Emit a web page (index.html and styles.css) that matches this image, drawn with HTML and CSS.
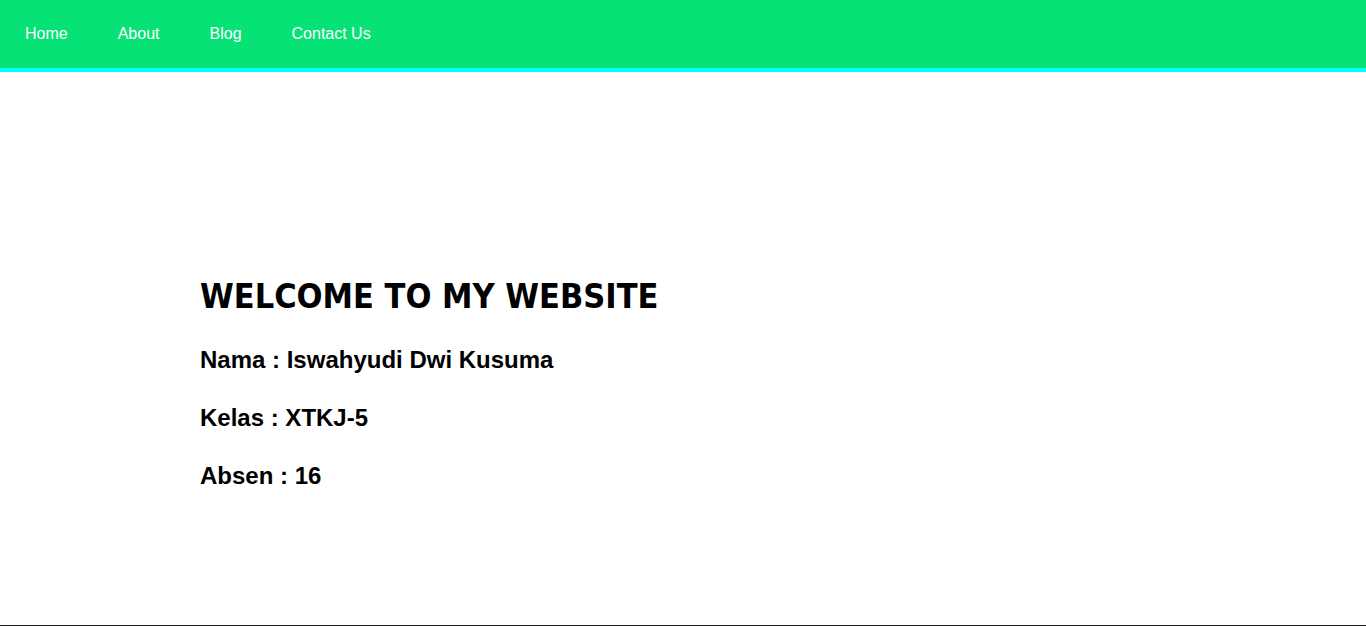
FILE: index.html
```html
<!DOCTYPE html>
<html lang="id">
<head>
<meta charset="utf-8">
<title>My Website</title>
<link rel="stylesheet" href="styles.css">
</head>
<body>
<nav class="nav">
  <ul class="nav-list">
    <li><a href="#">Home</a></li>
    <li><a href="#">About</a></li>
    <li><a href="#">Blog</a></li>
    <li><a href="#">Contact Us</a></li>
  </ul>
</nav>
<main class="main">
  <h1 class="title">WELCOME TO MY WEBSITE</h1>
  <p class="info">Nama : Iswahyudi Dwi Kusuma</p>
  <p class="info">Kelas : XTKJ-5</p>
  <p class="info">Absen : 16</p>
</main>
<footer class="footer"></footer>
</body>
</html>
```
FILE: styles.css
```css
* { box-sizing: border-box; }
html, body { margin: 0; padding: 0; background: #fff; }
body { font-family: "Liberation Sans", Arial, sans-serif; }

.nav {
  background: #07e277;
  border-bottom: 4px solid #00ffff;
  height: 72px;
}
.nav-list {
  list-style: none;
  margin: 0;
  padding: 0;
  display: flex;
  height: 68px;
  align-items: center;
}
.nav-list li a {
  display: block;
  padding: 0 25px;
  color: #fff;
  text-decoration: none;
  font-size: 16px;
  line-height: 68px;
}

.main {
  height: 553px;
  padding: 204px 0 0 200px;
}
.title {
  margin: 0 0 30px 0;
  font-family: "DejaVu Sans Condensed", "DejaVu Sans", sans-serif;
  font-weight: bold;
  font-size: 34px;
  line-height: 40px;
  color: #000;
}
.info {
  margin: 0 0 30px 0;
  font-size: 24px;
  font-weight: bold;
  line-height: 28px;
  color: #000;
}
.footer {
  height: 1px;
  background: #1c1c1c;
}
```
